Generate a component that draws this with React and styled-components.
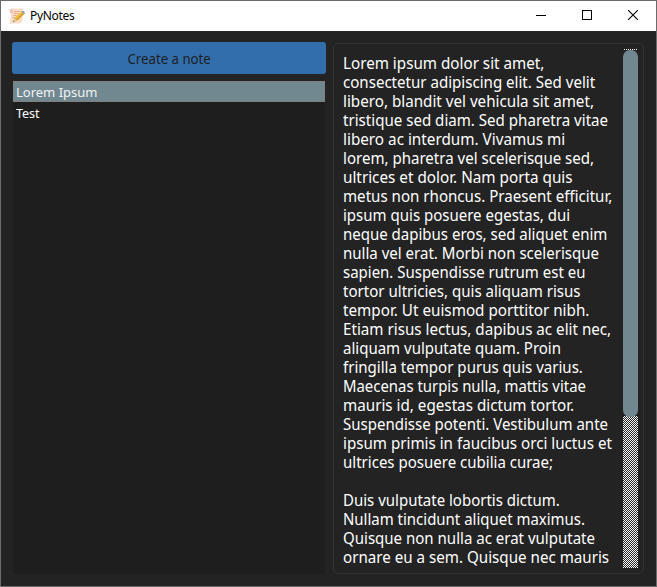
import React from 'react';
import styled, { createGlobalStyle } from 'styled-components';

const Global = createGlobalStyle`
  * { box-sizing: border-box; }
  body { margin: 0; background: #6b6b6b; overflow: hidden; }
`;

const Window = styled.div`
  width: 657px;
  height: 587px;
  display: flex;
  flex-direction: column;
  background: #232323;
  border: 1px solid #6b6b6b;
`;

const TitleBar = styled.header`
  height: 30px;
  flex: none;
  display: flex;
  align-items: center;
  background: #fff;
  padding-left: 8px;
  color: #000;
  font: 12px/30px 'Noto Sans', sans-serif;
`;

const Title = styled.span`
  flex: 1;
  margin-left: 5px;
  letter-spacing: -0.3px;
`;

const CaptionButton = styled.button`
  width: 46px;
  height: 30px;
  padding: 0 0 2px;
  border: 0;
  background: none;
  display: flex;
  align-items: center;
  justify-content: center;
`;

const Content = styled.main`
  flex: 1;
  min-height: 0;
  display: grid;
  grid-template-columns: 314px 311px;
  grid-template-rows: minmax(0, 1fr);
  gap: 7px;
  padding: 11px 11px 12px;
`;

const Sidebar = styled.section`
  display: flex;
  flex-direction: column;
  gap: 7px;
`;

const CreateButton = styled.button`
  height: 32px;
  flex: none;
  padding: 2px 0 0;
  border: 0;
  border-radius: 3px;
  background: #326eac;
  color: #1e1e1e;
  font: 14px/30px 'Noto Sans', sans-serif;
`;

const NoteList = styled.ul`
  flex: 1;
  margin: 0 1px;
  padding: 0;
  list-style: none;
  background: #1e1e1e;
  border-radius: 0 0 3px 3px;
`;

const NoteItem = styled.li`
  height: 21px;
  padding-left: 3px;
  color: ${(p) => (p.$selected ? '#f0f3f4' : '#fff')};
  background: ${(p) => (p.$selected ? '#728890' : 'transparent')};
  outline: ${(p) => (p.$selected ? '1px dotted #8d776f' : 'none')};
  outline-offset: -1px;
  font: 13px/22px 'Noto Sans', sans-serif;
`;

const Editor = styled.section`
  margin-top: 1px;
  display: flex;
  justify-content: space-between;
  border: 1px solid #323232;
  border-radius: 5px;
  padding: 5px 5px 5px 9px;
`;

const NoteText = styled.div`
  width: 272px;
  padding-top: 5px;
  color: #fff;
  font: 16px/19px 'Noto Sans', sans-serif;
  white-space: pre;
`;

const Line = styled.div`
  width: max-content;
  height: 19px;
`;

/* Condenses its text horizontally, keeping the letter height. */
const Condensed = styled.span`
  display: inline-block;
  transform: scaleX(${(p) => p.$scale});
  transform-origin: ${(p) => p.$origin || 'left'};
`;

const Checker = styled.div`
  flex: ${(p) => (p.$height ? `0 0 ${p.$height}px` : '1')};
  background: repeating-conic-gradient(#fff 0 25%, #232323 0 50%) 0 0 / 2px 2px;
`;

const ScrollTrack = styled.div`
  width: 15px;
  flex: none;
  display: flex;
  flex-direction: column;
`;

const ScrollThumb = styled.div`
  flex: 0 0 367px;
  margin-bottom: -1px;
  z-index: 1;
  border-radius: 7px;
  background: #728890;
`;

const lines = [
  ['Lorem ipsum dolor sit amet,', 0.95],
  ['consectetur adipiscing elit. Sed velit', 0.942],
  ['libero, blandit vel vehicula sit amet,', 0.949],
  ['tristique sed diam. Sed pharetra vitae', 0.943],
  ['libero ac interdum. Vivamus mi', 0.954],
  ['lorem, pharetra vel scelerisque sed,', 0.941],
  ['ultrices et dolor. Nam porta quis', 0.954],
  ['metus non rhoncus. Praesent efficitur,', 0.944],
  ['ipsum quis posuere egestas, dui', 0.938],
  ['neque dapibus eros, sed aliquet enim', 0.938],
  ['nulla vel erat. Morbi non scelerisque', 0.94],
  ['sapien. Suspendisse rutrum est eu', 0.936],
  ['tortor ultricies, quis aliquam risus', 0.941],
  ['tempor. Ut euismod porttitor nibh.', 0.952],
  ['Etiam risus lectus, dapibus ac elit nec,', 0.948],
  ['aliquam vulputate quam. Proin', 0.938],
  ['fringilla tempor purus quis varius.', 0.941],
  ['Maecenas turpis nulla, mattis vitae', 0.931],
  ['mauris id, egestas dictum tortor.', 0.95],
  ['Suspendisse potenti. Vestibulum ante', 0.938],
  ['ipsum primis in faucibus orci luctus et', 0.947],
  ['ultrices posuere cubilia curae;', 0.939],
  ['', 1],
  ['Duis vulputate lobortis dictum.', 0.937],
  ['Nullam tincidunt aliquet maximus.', 0.935],
  ['Quisque non nulla ac erat vulputate', 0.939],
  ['ornare eu a sem. Quisque nec mauris', 0.947],
];

const NoteIcon = () => (
  <svg width="16" height="16" viewBox="0 0 16 16">
    <path d="M3 0.5H13.5V12.5L11 15.5H1V11L2 10V5H1V2Q1 0.5 3 0.5Z" fill="#fbdcc6" />
    <path d="M1 2.5Q2 0 3.5 2V5H1Z" fill="#f3b9a5" />
    <path d="M5 3.5H11M4.5 5.5H10M4 7.5H8M3.5 9.5H6.5" stroke="#f1a795" strokeWidth="0.9" />
    <path d="M12.5 3.5L15.2 6L8 12.8L5.2 10.3Z" fill="#eebf3e" />
    <path d="M14 4.8L15.2 6L8 12.8L6.8 11.6Z" fill="#d8a332" />
    <path d="M12.5 3.5L13.4 2.8Q15.8 3 15.8 5.3L15.2 6Z" fill="#899499" />
    <path d="M5.2 10.3L8 12.8L4.2 14Z" fill="#e5c69b" />
    <path d="M4.6 12.5L5.7 13.5L4.2 14Z" fill="#555" />
  </svg>
);

export default function App() {
  return (
    <>
      <Global />
      <Window>
        <TitleBar>
          <NoteIcon />
          <Title>PyNotes</Title>
          <CaptionButton aria-label="Minimize">
            <svg width="10" height="10"><path d="M0 5.5H10" stroke="#000" /></svg>
          </CaptionButton>
          <CaptionButton aria-label="Maximize">
            <svg width="10" height="10"><rect x="0.5" y="0.5" width="9" height="9" fill="none" stroke="#000" /></svg>
          </CaptionButton>
          <CaptionButton aria-label="Close">
            <svg width="10" height="10"><path d="M0 0L10 10M10 0L0 10" stroke="#000" strokeWidth="1.1" /></svg>
          </CaptionButton>
        </TitleBar>
        <Content>
          <Sidebar>
            <CreateButton><Condensed $scale={0.943} $origin="center">Create a note</Condensed></CreateButton>
            <NoteList>
              <NoteItem $selected>Lorem Ipsum</NoteItem>
              <NoteItem><Condensed $scale={0.96}>Test</Condensed></NoteItem>
            </NoteList>
          </Sidebar>
          <Editor>
            <NoteText>
              {lines.map(([text, scale], i) => (
                <Line key={i}><Condensed $scale={scale}>{text}</Condensed></Line>
              ))}
            </NoteText>
            <ScrollTrack>
              <Checker $height={1} />
              <ScrollThumb />
              <Checker />
            </ScrollTrack>
          </Editor>
        </Content>
      </Window>
    </>
  );
}
